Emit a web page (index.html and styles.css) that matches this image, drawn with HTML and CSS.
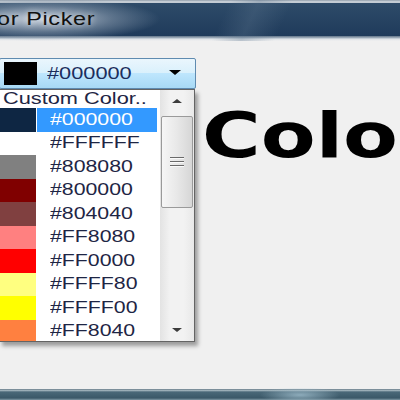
FILE: index.html
```html
<!DOCTYPE html>
<html lang="en">
<head>
    <meta charset="UTF-8">
    <meta name="viewport" content="width=device-width, initial-scale=1.0">
    <title>Color Picker</title>
    <link rel="stylesheet" href="styles.css">
</head>
<body>
    <div class="window">
        <div class="titlebar"><span class="title">or Picker</span></div>
        <div class="client">
            <div class="picker">
                <div class="combo">
                    <span class="swatch" style="background:#000000"></span>
                    <span class="value">#000000</span>
                    <span class="arrow"></span>
                </div>
                <div class="dropdown">
                    <div class="list">
                        <div class="row custom"><span class="label"><span class="txt">Custom Color..</span></span></div>
                        <div class="row selected"><span class="swatch" style="background:#000000"></span><span class="label"><span class="txt">#000000</span></span></div>
                        <div class="row"><span class="swatch" style="background:#FFFFFF"></span><span class="label"><span class="txt">#FFFFFF</span></span></div>
                        <div class="row"><span class="swatch" style="background:#808080"></span><span class="label"><span class="txt">#808080</span></span></div>
                        <div class="row"><span class="swatch" style="background:#800000"></span><span class="label"><span class="txt">#800000</span></span></div>
                        <div class="row"><span class="swatch" style="background:#804040"></span><span class="label"><span class="txt">#804040</span></span></div>
                        <div class="row"><span class="swatch" style="background:#FF8080"></span><span class="label"><span class="txt">#FF8080</span></span></div>
                        <div class="row"><span class="swatch" style="background:#FF0000"></span><span class="label"><span class="txt">#FF0000</span></span></div>
                        <div class="row"><span class="swatch" style="background:#FFFF80"></span><span class="label"><span class="txt">#FFFF80</span></span></div>
                        <div class="row"><span class="swatch" style="background:#FFFF00"></span><span class="label"><span class="txt">#FFFF00</span></span></div>
                        <div class="row"><span class="swatch" style="background:#FF8040"></span><span class="label"><span class="txt">#FF8040</span></span></div>
                    </div>
                    <div class="scrollbar">
                        <div class="scroll-btn"><span class="tri up"></span></div>
                        <div class="thumb"><span class="grip"></span><span class="grip"></span><span class="grip"></span></div>
                        <div class="track"></div>
                        <div class="scroll-btn"><span class="tri down"></span></div>
                    </div>
                </div>
            </div>
            <div class="heading"><span>Color</span></div>
        </div>
        <div class="frame-bottom"></div>
    </div>
</body>
</html>
```

FILE: styles.css
```css
html, body {
    margin: 0;
    padding: 0;
    background: #f0f0f0;
    overflow: hidden;
}
.window {
    width: 400px;
    height: 400px;
    display: flex;
    flex-direction: column;
    overflow: hidden;
}
.titlebar {
    height: 41px;
    flex: none;
    display: flex;
    align-items: center;
    background:
        radial-gradient(ellipse 120px 22px at 40px 19px, rgba(210,218,228,0.95), rgba(130,148,168,0.6) 60%, rgba(40,70,100,0) 100%),
        linear-gradient(115deg, rgba(255,255,255,0) 55%, rgba(90,115,140,0.35) 62%, rgba(255,255,255,0) 70%),
        linear-gradient(to bottom, #808e9c 0, #c4ccd4 1px, #c4ccd4 3px, #2e4b69 3px, #1f3b5b 36px, #5f7388 36px, #a8b5c2 38px, #dde3e8 39px, #f0f0f0 41px);
}
.title {
    display: inline-block;
    margin-left: -3px;
    margin-top: -2px;
    font-family: "Liberation Sans", Arial, sans-serif;
    font-size: 18px;
    letter-spacing: 0.5px;
    color: #111;
    transform: scaleX(1.3);
    transform-origin: left center;
    text-shadow: 0 0 6px rgba(230,236,242,0.8);
}
.client {
    flex: 1;
    display: flex;
    padding-top: 17px;
}
.picker {
    position: relative;
    flex: none;
    width: 197px;
    margin-left: -1px;
}
.combo {
    height: 31px;
    box-sizing: border-box;
    border: 1px solid #5f8bb0;
    border-radius: 2px;
    display: flex;
    align-items: center;
    padding-left: 4px;
    background: linear-gradient(to bottom, #eaf6fd 0, #d9f0fc 50%, #bee6fd 50%, #a7d9f5 100%);
}
.combo .swatch {
    width: 33px;
    height: 23px;
    flex: none;
}
.value {
    display: inline-block;
    margin-left: 10px;
    font-family: "Liberation Sans", Arial, sans-serif;
    font-size: 16px;
    color: #1b2d5c;
    transform: scaleX(1.36);
    transform-origin: left center;
}
.arrow {
    margin-left: auto;
    margin-right: 14px;
    width: 0;
    height: 0;
    border-left: 6px solid transparent;
    border-right: 6px solid transparent;
    border-top: 5px solid #000;
    margin-top: -2px;
}
.dropdown {
    position: absolute;
    top: 31px;
    left: 0;
    width: 196px;
    height: 253px;
    box-sizing: border-box;
    border: 1px solid #646464;
    background: #fff;
    display: flex;
    box-shadow: 3px 4px 4px rgba(0,0,0,0.35);
    overflow: hidden;
}
.list {
    flex: 1;
    display: flex;
    flex-direction: column;
}
.row {
    height: 23.5px;
    flex: none;
    display: flex;
    align-items: center;
    font-family: "Liberation Sans", Arial, sans-serif;
    font-size: 16px;
    color: #1e2544;
}
.row.custom {
    height: 18px;
}
.row .swatch {
    width: 36px;
    height: 100%;
    flex: none;
}
.label {
    height: 100%;
    width: 120px;
    margin-left: 1px;
    padding-left: 13px;
    box-sizing: border-box;
    display: flex;
    align-items: center;
    white-space: nowrap;
}
.row.custom .label {
    padding-left: 3px;
    margin-left: 0;
    width: auto;
}
.txt {
    display: inline-block;
    transform: scaleX(1.33);
    transform-origin: left center;
}
.row.custom .txt {
    transform: scaleX(1.36);
}
.row.selected .label {
    background: #3399ff;
    color: #fff;
}
.row.selected .swatch {
    box-shadow: inset 0 0 0 40px rgba(16,42,74,0.9);
}
.scrollbar {
    width: 34px;
    flex: none;
    display: flex;
    flex-direction: column;
    background: linear-gradient(to right, #e3e3e3, #f2f2f2 30%, #f2f2f2 70%, #e8e8e8);
}
.scroll-btn {
    height: 26px;
    flex: none;
    display: flex;
    align-items: center;
    justify-content: center;
}
.tri {
    width: 0;
    height: 0;
    border-left: 5px solid transparent;
    border-right: 5px solid transparent;
}
.tri.up {
    border-bottom: 4px solid #3c3c3c;
    margin-top: -4px;
}
.tri.down {
    border-top: 4px solid #3c3c3c;
    margin-top: 4px;
}
.thumb {
    height: 92px;
    margin: 0 1px;
    box-sizing: border-box;
    border: 1px solid #9a9a9a;
    border-radius: 2px;
    background: linear-gradient(to right, #f6f6f6, #e8e8e8 50%, #d6d6d6);
    display: flex;
    flex-direction: column;
    align-items: center;
    justify-content: center;
    gap: 2px;
}
.grip {
    width: 14px;
    height: 1px;
    background: #6a6a6a;
    border-bottom: 1px solid #fafafa;
}
.track {
    flex: 1;
}
.heading {
    flex: none;
    margin-top: 47px;
    margin-left: 6px;
    height: 62px;
    font-family: "DejaVu Sans", Verdana, sans-serif;
    font-weight: bold;
    font-size: 62px;
    line-height: 62px;
    color: #000;
}
.heading span {
    display: inline-block;
    transform: scaleX(1.29);
    transform-origin: left center;
}
.frame-bottom {
    height: 12px;
    flex: none;
    background:
        radial-gradient(ellipse 40px 8px at 300px 7px, rgba(160,190,205,0.8), rgba(160,190,205,0)),
        linear-gradient(to bottom, #f0f0f0 0, #f0f0f0 0.5px, #42596a 1px, #b5c5cb 2px, #4a6878 4px, #3b5868 10px, #7f98a4 12px);
}
```
